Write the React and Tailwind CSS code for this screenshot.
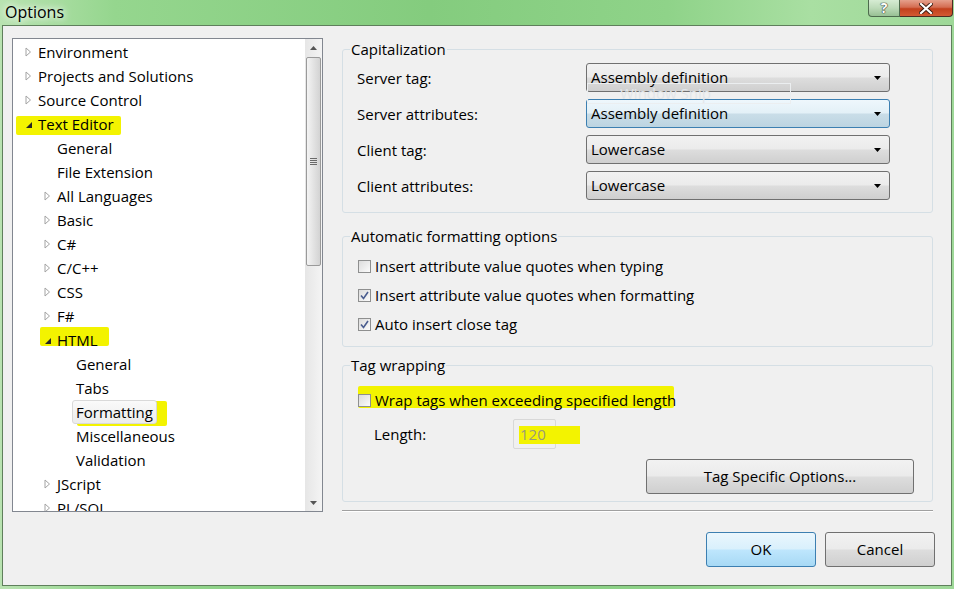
import React from 'react';

const treeItems = [
  { label: 'Environment', level: 0, arrow: 'closed' },
  { label: 'Projects and Solutions', level: 0, arrow: 'closed' },
  { label: 'Source Control', level: 0, arrow: 'closed' },
  { label: 'Text Editor', level: 0, arrow: 'open', mark: 'text' },
  { label: 'General', level: 1 },
  { label: 'File Extension', level: 1 },
  { label: 'All Languages', level: 1, arrow: 'closed' },
  { label: 'Basic', level: 1, arrow: 'closed' },
  { label: 'C#', level: 1, arrow: 'closed' },
  { label: 'C/C++', level: 1, arrow: 'closed' },
  { label: 'CSS', level: 1, arrow: 'closed' },
  { label: 'F#', level: 1, arrow: 'closed' },
  { label: 'HTML', level: 1, arrow: 'open', mark: 'html' },
  { label: 'General', level: 2 },
  { label: 'Tabs', level: 2 },
  { label: 'Formatting', level: 2, selected: true, mark: 'fmt' },
  { label: 'Miscellaneous', level: 2 },
  { label: 'Validation', level: 2 },
  { label: 'JScript', level: 1, arrow: 'closed' },
  { label: 'PL/SQL', level: 1, arrow: 'closed' },
];

const indent = ['pl-[6px]', 'pl-[25px]', 'pl-[44px]'];

const Arrow = ({ type }) => {
  if (type === 'closed') {
    return (
      <svg width="7" height="10" viewBox="0 0 7 10">
        <polygon points="1,1 5.5,5 1,9" fill="#fff" stroke="#a3a3a3" strokeWidth="1" />
      </svg>
    );
  }
  if (type === 'open') {
    return (
      <svg width="8" height="8" viewBox="0 0 8 8" className="mt-[2px]">
        <polygon points="7,1 7,7 1,7" fill="#262626" />
      </svg>
    );
  }
  return null;
};

// yellow marker strokes drawn over the screenshot
const Mark = ({ kind }) => {
  if (kind === 'text') return <span className="absolute left-[3px] top-[4px] w-[105px] h-[19px] bg-[#f3f300] rounded-[2px]" />;
  if (kind === 'html') return <span className="absolute left-[27px] top-[-1px] w-[69px] h-[19px] bg-[#f3f300] rounded-[2px]" />;
  if (kind === 'fmt') return <span className="absolute left-[64px] top-[1px] w-[90px] h-[25px] bg-[#f3f300] rounded-[2px]" />;
  return null;
};

const Checkbox = ({ checked }) => (
  <span className="w-[13px] h-[13px] border border-[#8e8f8f] bg-[linear-gradient(135deg,#dcdcdc,#fbfbfb)] flex items-center justify-center shrink-0">
    {checked && (
      <svg width="9" height="9" viewBox="0 0 9 9">
        <path d="M1 4.5 L3.5 7.5 L8 1" fill="none" stroke="#4a5d8f" strokeWidth="1.6" />
      </svg>
    )}
  </span>
);

const Dropdown = ({ value, hot }) => (
  <div
    className={
      hot
        ? 'w-[304px] h-[29px] border border-[#3c7fb1] rounded-[3px] bg-[linear-gradient(#eef7fc_0%,#e3f0f7_48%,#c9dde8_52%,#bcd4e1_100%)] flex items-center justify-between pl-[4px] pr-[8px]'
        : 'w-[304px] h-[29px] border border-[#707070] rounded-[3px] bg-[linear-gradient(#f2f2f2_0%,#ebebeb_48%,#dddddd_52%,#cfcfcf_100%)] flex items-center justify-between pl-[4px] pr-[8px]'
    }
  >
    <span>{value}</span>
    <svg width="7" height="4" viewBox="0 0 7 4">
      <polygon points="0,0 7,0 3.5,4" fill="#000" />
    </svg>
  </div>
);

const Button = ({ children, primary, className }) => (
  <div
    className={
      (primary
        ? 'border border-[#3c7fb1] bg-[linear-gradient(#eaf6fd_0%,#d9f0fc_48%,#bee6fd_52%,#a7d9f5_100%)] '
        : 'border border-[#707070] bg-[linear-gradient(#f2f2f2_0%,#ebebeb_48%,#dddddd_52%,#cfcfcf_100%)] ') +
      'rounded-[3px] flex items-center justify-center ' +
      className
    }
  >
    {children}
  </div>
);

export default function App() {
  return (
    <div className="w-[954px] h-[589px] flex flex-col bg-[linear-gradient(90deg,#b9e3b1_0%,#95d68e_12%,#84cc7e_45%,#8fd389_70%,#a9dfa2_85%,#9ed898_100%)] font-['Segoe_UI','Open_Sans',sans-serif] text-[15px] text-black overflow-hidden">
      {/* title bar */}
      <div className="h-[25px] flex items-start justify-between shrink-0">
        <span className="pl-[5px] pt-[1px] text-[16px] leading-[22px] text-black [text-shadow:0_0_6px_#ffffff,0_0_10px_#ffffff]">Options</span>
        <div className="flex mr-[1px]">
          <div className="w-[32px] h-[17px] border border-[#4d6b4d] border-t-0 rounded-bl-[4px] bg-[linear-gradient(#d6ecd3_0%,#bcdab8_50%,#98c094_100%)] flex items-center justify-center">
            <span className="text-[14px] leading-none font-bold text-white [text-shadow:0_0_1px_#333,0_0_1px_#333,0_0_1px_#333]">?</span>
          </div>
          <div className="w-[53px] h-[17px] border border-[#4d2b22] border-t-0 border-l-0 rounded-br-[4px] bg-[linear-gradient(#e5a08c_0%,#d46d52_45%,#c2401d_55%,#d35a33_100%)] flex items-center justify-center">
            <svg width="14" height="11" viewBox="0 0 14 11">
              <path d="M2 1 L12 10 M12 1 L2 10" stroke="#3a1a10" strokeWidth="4" strokeLinecap="square" />
              <path d="M2 1 L12 10 M12 1 L2 10" stroke="#fff" strokeWidth="2.2" strokeLinecap="square" />
            </svg>
          </div>
        </div>
      </div>

      {/* client area */}
      <div className="flex-1 mx-[2px] mb-[3px] border border-[#5f7f5c] bg-[#f0f0f0] flex flex-col">
        <div className="flex pt-[12px] pl-[9px]">
          {/* tree */}
          <div className="w-[311px] h-[474px] border border-[#828790] bg-white flex">
            <div className="flex-1 overflow-hidden pt-[1px]">
              {treeItems.map((item, i) => (
                <div key={i} className={'relative h-[24px] flex items-center ' + indent[item.level]}>
                  {item.mark && <Mark kind={item.mark} />}
                  <span className="relative w-[19px] flex items-center justify-center">
                    <Arrow type={item.arrow} />
                  </span>
                  {item.selected ? (
                    <span className="relative ml-[-4px] h-[24px] px-[3px] border border-[#d9d9d9] rounded-[3px] bg-[linear-gradient(#fafafa,#ececec)] flex items-center">
                      <span className="relative">{item.label}</span>
                    </span>
                  ) : (
                    <span className="relative whitespace-nowrap">{item.label}</span>
                  )}
                </div>
              ))}
            </div>
            {/* scrollbar */}
            <div className="w-[17px] bg-[linear-gradient(90deg,#e6e6e6,#f4f4f4)] flex flex-col items-center">
              <div className="h-[17px] flex items-center justify-center">
                <svg width="7" height="4" viewBox="0 0 7 4"><polygon points="3.5,0 7,4 0,4" fill="#555" /></svg>
              </div>
              <div className="mt-[1px] w-[15px] h-[209px] border border-[#9a9a9a] rounded-[2px] bg-[linear-gradient(90deg,#f4f4f4,#e3e3e3_50%,#d3d3d3)] flex items-center justify-center">
                <div className="flex flex-col gap-[1px]">
                  <span className="w-[7px] h-[1px] bg-[#6a6a6a]" />
                  <span className="w-[7px] h-[1px] bg-[#6a6a6a]" />
                  <span className="w-[7px] h-[1px] bg-[#6a6a6a]" />
                  <span className="w-[7px] h-[1px] bg-[#6a6a6a]" />
                </div>
              </div>
              <div className="flex-1" />
              <div className="h-[17px] flex items-center justify-center">
                <svg width="7" height="4" viewBox="0 0 7 4"><polygon points="0,0 7,0 3.5,4" fill="#555" /></svg>
              </div>
            </div>
          </div>

          {/* right panel */}
          <div className="ml-[19px] mt-[1px] w-[591px] flex flex-col">
            <fieldset className="relative h-[174px] border border-[#d5dfe5] rounded-[3px] px-[7px] pb-0">
              <legend className="px-[1px] leading-[20px]">Capitalization</legend>
              <div className="pl-[7px] pt-[4px] flex flex-col gap-[7px]">
                {[
                  ['Server tag:', 'Assembly definition', false],
                  ['Server attributes:', 'Assembly definition', true],
                  ['Client tag:', 'Lowercase', false],
                  ['Client attributes:', 'Lowercase', false],
                ].map(([label, value, hot], i) => (
                  <div key={i} className="flex items-center">
                    <span className="w-[229px] pt-[2px]">{label}</span>
                    <Dropdown value={value} hot={hot} />
                  </div>
                ))}
              </div>
              {/* faint "Window Snip" watermark */}
              <div className="absolute left-[244px] top-[24px] w-[204px] h-[21px] border border-[#ebeef0] flex items-center pl-[32px] text-[#e2e6ea]">Window Snip</div>
            </fieldset>

            <fieldset className="mt-[13px] h-[121px] border border-[#d5dfe5] rounded-[3px] px-[7px]">
              <legend className="px-[1px] leading-[20px]">Automatic formatting options</legend>
              <div className="pl-[8px] pt-[6px] flex flex-col">
                {[
                  ['Insert attribute value quotes when typing', false],
                  ['Insert attribute value quotes when formatting', true],
                  ['Auto insert close tag', true],
                ].map(([label, checked], i) => (
                  <div key={i} className="h-[29px] flex items-center gap-[4px]">
                    <Checkbox checked={checked} />
                    <span>{label}</span>
                  </div>
                ))}
              </div>
            </fieldset>

            <fieldset className="mt-[8px] h-[147px] border border-[#d5dfe5] rounded-[3px] px-[7px]">
              <legend className="px-[1px] leading-[20px]">Tag wrapping</legend>
              <div className="pl-[8px] pt-[11px] flex flex-col">
                <div className="relative h-[29px] flex items-center gap-[4px]">
                  <span className="absolute left-[0px] top-[0px] w-[316px] h-[22px] bg-[#f3f300] rounded-[2px]" />
                  <span className="relative"><Checkbox checked={false} /></span>
                  <span className="relative">Wrap tags when exceeding specified length</span>
                </div>
                <div className="mt-[4px] h-[30px] flex items-center">
                  <span className="w-[155px] pl-[16px]">Length:</span>
                  <div className="relative w-[43px] h-[30px] border border-[#d8d8d8] rounded-[2px] bg-[#f0f0f0] flex items-center">
                    <span className="absolute left-[5px] top-[6px] w-[61px] h-[18px] bg-[#f3f300]" />
                    <span className="relative pl-[6px] text-[#9a9a7a]">120</span>
                  </div>
                </div>
                <div className="mt-[10px] flex justify-end pr-[11px]">
                  <Button className="w-[268px] h-[35px]">Tag Specific Options...</Button>
                </div>
              </div>
            </fieldset>

            <div className="mt-[8px] h-[2px] border-t border-[#a0a0a0] border-b border-b-white" />

            <div className="mt-[20px] mr-[-2px] flex justify-end gap-[9px]">
              <Button primary className="w-[110px] h-[35px]">OK</Button>
              <Button className="w-[110px] h-[35px]">Cancel</Button>
            </div>
          </div>
        </div>
      </div>
    </div>
  );
}
